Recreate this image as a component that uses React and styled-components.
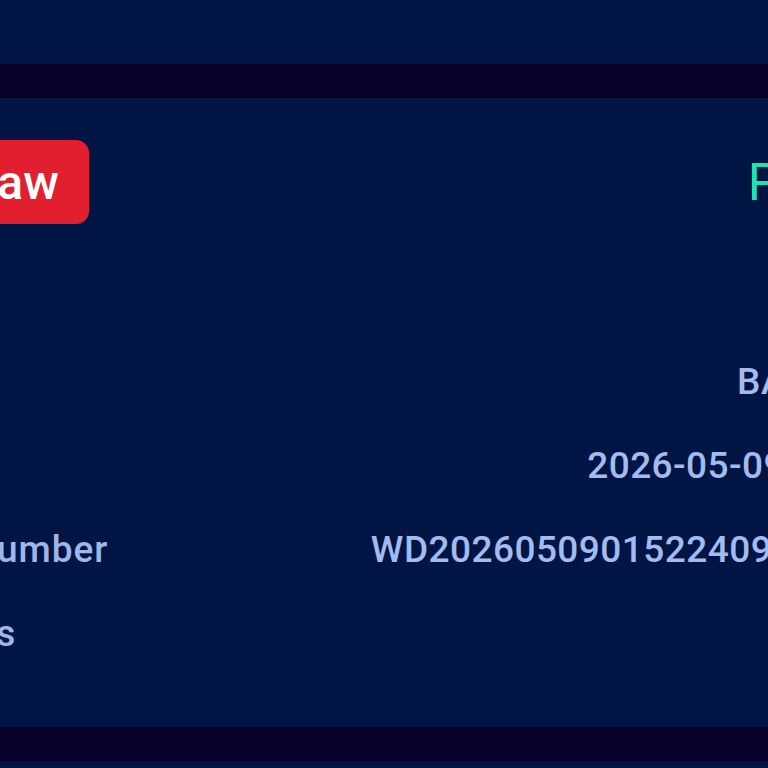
import React from "react";
import styled, { createGlobalStyle } from "styled-components";

const GlobalStyle = createGlobalStyle`
  html, body {
    margin: 0;
    padding: 0;
    background: #0a002c;
    overflow: hidden;
  }
  body {
    font-family: Roboto, "Liberation Sans", sans-serif;
  }
`;

const Page = styled.div`
  display: flex;
  flex-direction: column;
  gap: 34px;
  width: 1147px;
  margin-left: -170px;
`;

const Card = styled.section`
  background: #011545;
  box-sizing: border-box;
  padding: ${(p) => (p.$stub ? "0" : "42px 0 52px")};
  height: ${(p) => (p.$stub ? "64px" : "auto")};
`;

const Header = styled.div`
  display: flex;
  align-items: center;
  justify-content: space-between;
  height: 84px;
  padding: 0 33px 16px 2px;
  border-bottom: 1px solid #03194b;
  margin-bottom: 14px;
`;

const WithdrawButton = styled.button`
  height: 84px;
  padding: 0 30px 0 25px;
  border: none;
  border-radius: 13px;
  background: #e21f2e;
  color: #ffffff;
  font-family: Roboto, "Liberation Sans", sans-serif;
  font-size: 48px;
  font-weight: 500;
`;

const Status = styled.span`
  color: ${(p) => p.$color};
  font-size: 51px;
  font-weight: 400;
  letter-spacing: 1.6px;
`;

const Row = styled.div`
  display: flex;
  align-items: center;
  justify-content: space-between;
  height: 84px;
  padding: 0 33px;
  font-size: 37px;
  font-weight: 500;
  color: #a3bbef;
  letter-spacing: 0.45px;
`;

const Label = styled.span`
  color: #a1b6e8;
  letter-spacing: 0.95px;
`;

const Value = styled.span`
  text-align: right;
  white-space: nowrap;
`;

const rows = [
  { label: "Amount", value: "500.00" },
  { label: "Method", value: "BANK CARD" },
  { label: "Time", value: "2026-05-09 01:52:24" },
  { label: "Order Number", value: "WD202605090152240947183625" },
  { label: "Remarks", value: "-" },
];

export default function App() {
  return (
    <>
      <GlobalStyle />
      <Page>
        <Card $stub />
        <Card>
          <Header>
            <WithdrawButton>Withdraw</WithdrawButton>
            <Status $color="#1fe2b3">Pending</Status>
          </Header>
          {rows.map((r) => (
            <Row key={r.label}>
              <Label>{r.label}</Label>
              <Value>{r.value}</Value>
            </Row>
          ))}
        </Card>
        <Card $stub />
      </Page>
    </>
  );
}
